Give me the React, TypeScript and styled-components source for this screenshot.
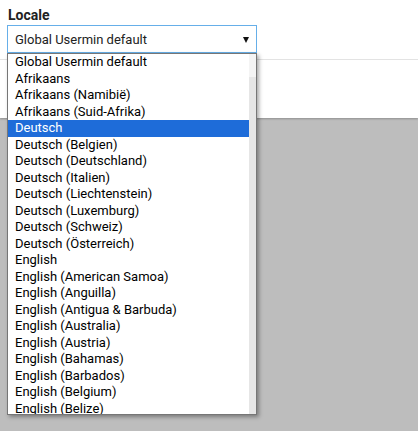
import React from "react";
import styled, { createGlobalStyle } from "styled-components";

const Global = createGlobalStyle`
  html, body { margin: 0; padding: 0; background: #bdbdbd; }
  body { font-family: Roboto, "Liberation Sans", Arial, sans-serif; }
  * { box-sizing: border-box; }
`;

const Page = styled.div`
  position: relative;
  width: 418px;
  height: 431px;
  overflow: hidden;
  display: flex;
  flex-direction: column;
  background: #bdbdbd;
`;

const Panel = styled.div`
  height: 118px;
  background: #fff;
  display: flex;
  flex-direction: column;
  box-shadow: 0 1px 2px rgba(0, 0, 0, 0.25);
`;

const Label = styled.div`
  margin: 7px 0 0 8px;
  font-size: 14px;
  line-height: 16px;
  font-weight: 700;
  color: #222;
`;

const SelectBox = styled.div`
  margin: 2px 0 0 7px;
  width: 250px;
  height: 28px;
  border: 1px solid #66afe9;
  display: flex;
  align-items: center;
  justify-content: space-between;
  padding: 0 7px 0 7px;
  font-size: 13px;
  color: #222;
`;

const Arrow = styled.span`
  width: 0;
  height: 0;
  border-left: 3.5px solid transparent;
  border-right: 3.5px solid transparent;
  border-top: 6px solid #111;
  margin-top: 1px;
`;

const Divider = styled.div`
  margin-top: 6px;
  height: 1px;
  background: #e3e3e3;
`;

const Popup = styled.div`
  position: absolute;
  left: 7px;
  top: 53px;
  width: 250px;
  height: 362px;
  border: 1px solid #767676;
  background: #fff;
  display: flex;
  overflow: hidden;
  box-shadow: 2px 2px 4px rgba(0, 0, 0, 0.35);
`;

const List = styled.div`
  flex: 1;
  overflow: hidden;
`;

const Option = styled.div<{ $selected?: boolean }>`
  height: 16.5px;
  line-height: 16.5px;
  padding-left: 7px;
  font-size: 13px;
  white-space: nowrap;
  color: ${(p) => (p.$selected ? "#fff" : "#000")};
  background: ${(p) => (p.$selected ? "#1e6cd9" : "transparent")};
`;

const Scrollbar = styled.div`
  width: 7px;
  display: flex;
  flex-direction: column;
  background: #e6e6e6;
`;

const ScrollTop = styled.div`
  height: 23px;
  background: #f4f4f4;
`;

const options = [
  "Global Usermin default",
  "Afrikaans",
  "Afrikaans (Namibië)",
  "Afrikaans (Suid-Afrika)",
  "Deutsch",
  "Deutsch (Belgien)",
  "Deutsch (Deutschland)",
  "Deutsch (Italien)",
  "Deutsch (Liechtenstein)",
  "Deutsch (Luxemburg)",
  "Deutsch (Schweiz)",
  "Deutsch (Österreich)",
  "English",
  "English (American Samoa)",
  "English (Anguilla)",
  "English (Antigua & Barbuda)",
  "English (Australia)",
  "English (Austria)",
  "English (Bahamas)",
  "English (Barbados)",
  "English (Belgium)",
  "English (Belize)",
];

export default function App() {
  return (
    <Page>
      <Global />
      <Panel>
        <Label>Locale</Label>
        <SelectBox>
          <span>Global Usermin default</span>
          <Arrow />
        </SelectBox>
        <Divider />
      </Panel>
      <Popup>
        <List>
          {options.map((o) => (
            <Option key={o} $selected={o === "Deutsch"}>
              {o}
            </Option>
          ))}
        </List>
        <Scrollbar>
          <ScrollTop />
        </Scrollbar>
      </Popup>
    </Page>
  );
}
